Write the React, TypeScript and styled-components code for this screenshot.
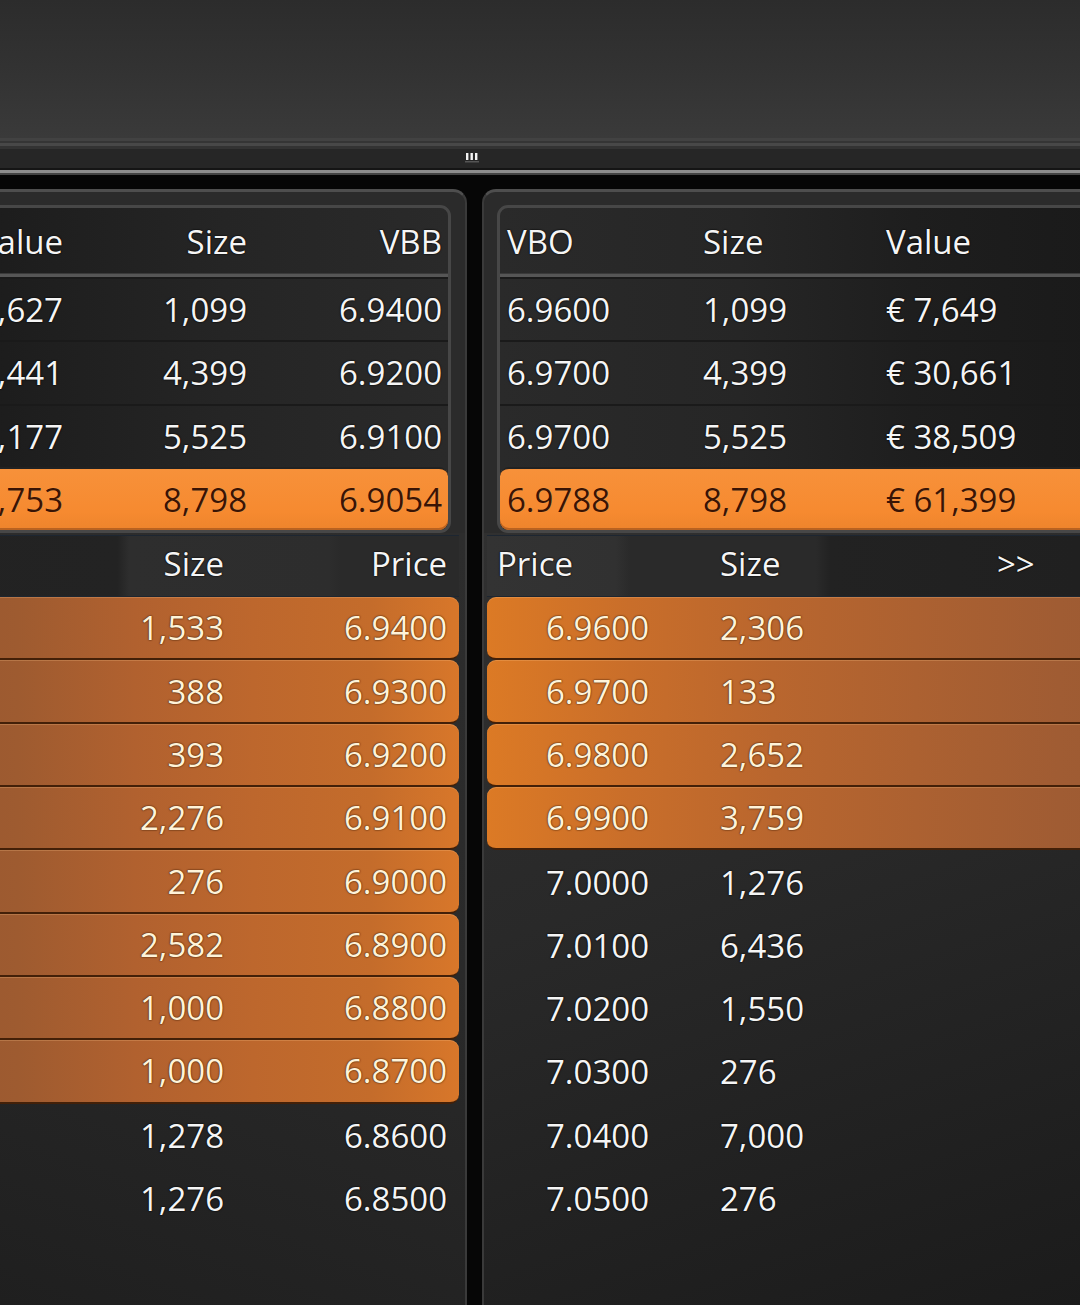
import React from 'react';
import styled, { createGlobalStyle, css } from 'styled-components';

type Side = 'left' | 'right';
type Align = 'left' | 'right' | 'center';

const GlobalStyle = createGlobalStyle`
  html, body {
    margin: 0;
    padding: 0;
    background: #060606;
    overflow: hidden;
  }
  body {
    font-family: "Open Sans", "Noto Sans", sans-serif;
    -webkit-font-smoothing: antialiased;
  }
`;

const Screen = styled.div`
  width: 1080px;
  height: 1305px;
  overflow: hidden;
  display: flex;
  flex-direction: column;
  background: #060606;
`;

/* upper (empty) workspace pane */
const TopPane = styled.div`
  flex: none;
  height: 138px;
  background: linear-gradient(180deg, #2c2c2c 0%, #333 55%, #3a3a3a 100%);
`;

/* horizontal splitter with its drag grip */
const Splitter = styled.div`
  flex: none;
  height: 51px;
  box-sizing: border-box;
  padding: 15px 0 0 465px;
  background: linear-gradient(
    180deg,
    #424242 0px, #424242 3px,
    #353535 3px, #353535 5px,
    #484848 5px, #484848 8px,
    #333 8px, #333 11px,
    #262626 11px, #262626 30px,
    #151515 30px, #151515 32px,
    #8e8e8e 32px, #8e8e8e 35px,
    #444 35px, #444 37px,
    #060606 37px, #060606 51px
  );
`;

const Grip = styled.svg`
  display: block;
`;

const GripMark = () => (
  <Grip width="14" height="10" viewBox="0 0 14 10">
    <rect x="1" y="0" width="2.4" height="7" fill="#f2f2f2" />
    <rect x="5.5" y="0" width="2.4" height="7" fill="#f2f2f2" />
    <rect x="10" y="0" width="2.4" height="7" fill="#f2f2f2" />
    <rect x="0" y="8" width="14" height="1.5" fill="#555" />
  </Grip>
);

const Workspace = styled.div`
  flex: 1;
  display: flex;
  gap: 15px;
  min-height: 0;
`;

const Panel = styled.div<{ $side: Side }>`
  flex: none;
  display: flex;
  flex-direction: column;
  box-sizing: border-box;
  padding-top: 13px;
  background: #2b2b2b;
  border-top: 3px solid #4e4e4e;
  ${p =>
    p.$side === 'left'
      ? css`
          width: 597px;
          margin-left: -130px;
          border-right: 2px solid #3a3a3a;
          border-top-right-radius: 14px;
        `
      : css`
          width: 720px;
          border-left: 2px solid #3a3a3a;
          border-top-left-radius: 14px;
        `}
`;

/* best bid / best offer summary table */
const Book = styled.div<{ $side: Side }>`
  flex: none;
  border: 3px solid #474747;
  ${p =>
    p.$side === 'left'
      ? css`
          margin: 0 14px 0 12px;
          border-radius: 0 11px 11px 0;
          background: linear-gradient(90deg, #181818 0%, #1f1f1f 30%, #252525 60%, #2a2a2a 100%);
        `
      : css`
          margin: 0 12px 0 13px;
          border-radius: 11px 0 0 11px;
          background: linear-gradient(90deg, #2a2a2a 0%, #262626 35%, #1e1e1e 60%, #181818 100%);
        `}
`;

const BookGrid = css<{ $side: Side }>`
  display: grid;
  grid-template-columns: ${p => (p.$side === 'left' ? '1fr 184px 198px' : '196px 183px 1fr')};
  box-sizing: border-box;
`;

const BookHead = styled.div<{ $side: Side }>`
  ${BookGrid};
  height: 69px;
  border-bottom: 3px solid #565656;
  box-shadow: inset 0 -1px 0 #3a3a3a;
`;

const BookRow = styled.div<{ $side: Side; $hl?: boolean }>`
  ${BookGrid};
  height: 63.3px;
  border-top: 2px solid #1a1a1a;
  &:first-of-type {
    border-top: none;
  }
  ${p =>
    p.$hl &&
    css`
      border-top: 2px solid #222;
      background: linear-gradient(180deg, #f7913a 0%, #f68a30 70%, #ee842c 100%);
      border-radius: ${p.$side === 'left' ? '0 9px 9px 0' : '9px 0 0 9px'};
      box-shadow: inset 0 -2px 0 #b96220;
    `}
`;

const Cell = styled.div<{ $align: Align; $pl?: number; $pr?: number; $dark?: boolean; $warm?: boolean }>`
  display: flex;
  align-items: center;
  justify-content: ${p => (p.$align === 'left' ? 'flex-start' : p.$align === 'right' ? 'flex-end' : 'center')};
  padding-left: ${p => p.$pl ?? 0}px;
  padding-right: ${p => p.$pr ?? 0}px;
  font-size: 33px;
  white-space: nowrap;
  color: ${p => (p.$dark ? '#3a1404' : p.$warm ? '#fff3d8' : '#f5f5f5')};
  text-shadow: ${p =>
    p.$dark
      ? '0 0 1px rgba(255,190,120,0.6)'
      : p.$warm
      ? '0 0 2px rgba(60,25,5,0.9), 0 0 1px rgba(60,25,5,0.9)'
      : '0 0 2px #000, 0 0 1px #000'};
`;

/* price ladder */
const LadderGrid = css<{ $side: Side }>`
  display: grid;
  grid-template-columns: ${p => (p.$side === 'left' ? '1fr 223px 223px' : '221px 221px 1fr')};
  box-sizing: border-box;
`;

const LadderHead = styled.div<{ $side: Side }>`
  ${LadderGrid};
  flex: none;
  height: 62px;
  margin-top: 2px;
  padding-bottom: 6px;
  border-top: 1px solid #1d2631;
  border-bottom: 1px solid #1d2631;
  ${p =>
    p.$side === 'left'
      ? css`
          margin-right: 6px;
          background: linear-gradient(90deg, #222 0%, #232323 42%, #2e2e2e 44%, #2d2d2d 78%, #2a2a2a 80%, #2a2a2a 100%);
        `
      : css`
          margin-left: 3px;
          background: linear-gradient(90deg, #333 0%, #313131 18%, #2a2a2a 20%, #2a2a2a 46%, #222 48%, #1f1f1f 100%);
        `}
`;

const Ladder = styled.div<{ $side: Side }>`
  flex: 1;
  display: flex;
  flex-direction: column;
  background: ${p =>
    p.$side === 'left'
      ? 'linear-gradient(200deg, #2d2d2d 0%, #2a2a2a 45%, #1e1e1e 100%)'
      : 'linear-gradient(160deg, #303030 0%, #292929 40%, #1a1a1a 100%)'};
`;

const LadderRow = styled.div<{ $side: Side; $fill?: boolean }>`
  ${LadderGrid};
  flex: none;
  height: 63.3px;
  ${p => (p.$side === 'left' ? 'margin-right: 6px;' : 'margin-left: 3px;')}
  ${p =>
    p.$fill &&
    css`
      border-bottom: 2px solid #432008;
      box-shadow: inset 0 1px 0 rgba(255, 200, 140, 0.25);
      border-radius: ${p.$side === 'left' ? '0 9px 9px 0' : '9px 0 0 9px'};
      background: ${p.$side === 'left'
        ? 'linear-gradient(90deg, #965630 0%, #9e5b30 25%, #b1612f 45%, #bd672d 65%, #c46c2b 85%, #d8772a 100%)'
        : 'linear-gradient(90deg, #dc7a25 0%, #c96e2a 20%, #b9662e 40%, #ac6131 60%, #a05c33 80%, #975831 100%)'};
    `}
`;

const bidBook = [
  ['€ 7,627', '1,099', '6.9400'],
  ['€ 30,441', '4,399', '6.9200'],
  ['€ 38,177', '5,525', '6.9100'],
  ['€ 60,753', '8,798', '6.9054'],
];

const askBook = [
  ['6.9600', '1,099', '€ 7,649'],
  ['6.9700', '4,399', '€ 30,661'],
  ['6.9700', '5,525', '€ 38,509'],
  ['6.9788', '8,798', '€ 61,399'],
];

const bids = [
  ['1,533', '6.9400'],
  ['388', '6.9300'],
  ['393', '6.9200'],
  ['2,276', '6.9100'],
  ['276', '6.9000'],
  ['2,582', '6.8900'],
  ['1,000', '6.8800'],
  ['1,000', '6.8700'],
  ['1,278', '6.8600'],
  ['1,276', '6.8500'],
];

const asks = [
  ['6.9600', '2,306'],
  ['6.9700', '133'],
  ['6.9800', '2,652'],
  ['6.9900', '3,759'],
  ['7.0000', '1,276'],
  ['7.0100', '6,436'],
  ['7.0200', '1,550'],
  ['7.0300', '276'],
  ['7.0400', '7,000'],
  ['7.0500', '276'],
];

const BID_FILLED = 8;
const ASK_FILLED = 4;

export default function App() {
  return (
    <Screen>
      <GlobalStyle />
      <TopPane />
      <Splitter>
        <GripMark />
      </Splitter>
      <Workspace>
        <Panel $side="left">
          <Book $side="left">
            <BookHead $side="left">
              <Cell $align="right" $pr={3}>Value</Cell>
              <Cell $align="right" $pr={3}>Size</Cell>
              <Cell $align="right" $pr={6}>VBB</Cell>
            </BookHead>
            {bidBook.map((r, i) => {
              const hl = i === bidBook.length - 1;
              return (
                <BookRow key={i} $side="left" $hl={hl}>
                  <Cell $align="right" $pr={3} $dark={hl}>{r[0]}</Cell>
                  <Cell $align="right" $pr={3} $dark={hl}>{r[1]}</Cell>
                  <Cell $align="right" $pr={6} $dark={hl}>{r[2]}</Cell>
                </BookRow>
              );
            })}
          </Book>
          <Ladder $side="left">
            <LadderHead $side="left">
              <Cell $align="right" />
              <Cell $align="right" $pr={12}>Size</Cell>
              <Cell $align="right" $pr={12}>Price</Cell>
            </LadderHead>
            {bids.map((r, i) => {
              const fill = i < BID_FILLED;
              return (
                <LadderRow key={i} $side="left" $fill={fill}>
                  <Cell $align="right" />
                  <Cell $align="right" $pr={12} $warm={fill}>{r[0]}</Cell>
                  <Cell $align="right" $pr={12} $warm={fill}>{r[1]}</Cell>
                </LadderRow>
              );
            })}
          </Ladder>
        </Panel>

        <Panel $side="right">
          <Book $side="right">
            <BookHead $side="right">
              <Cell $align="left" $pl={7}>VBO</Cell>
              <Cell $align="left" $pl={7}>Size</Cell>
              <Cell $align="left" $pl={7}>Value</Cell>
            </BookHead>
            {askBook.map((r, i) => {
              const hl = i === askBook.length - 1;
              return (
                <BookRow key={i} $side="right" $hl={hl}>
                  <Cell $align="left" $pl={7} $dark={hl}>{r[0]}</Cell>
                  <Cell $align="left" $pl={7} $dark={hl}>{r[1]}</Cell>
                  <Cell $align="left" $pl={7} $dark={hl}>{r[2]}</Cell>
                </BookRow>
              );
            })}
          </Book>
          <Ladder $side="right">
            <LadderHead $side="right">
              <Cell $align="left" $pl={10}>Price</Cell>
              <Cell $align="left" $pl={12}>Size</Cell>
              <Cell $align="left" $pl={68}>&gt;&gt;</Cell>
            </LadderHead>
            {asks.map((r, i) => {
              const fill = i < ASK_FILLED;
              return (
                <LadderRow key={i} $side="right" $fill={fill}>
                  <Cell $align="center" $warm={fill}>{r[0]}</Cell>
                  <Cell $align="left" $pl={12} $warm={fill}>{r[1]}</Cell>
                  <Cell $align="left" />
                </LadderRow>
              );
            })}
          </Ladder>
        </Panel>
      </Workspace>
    </Screen>
  );
}
